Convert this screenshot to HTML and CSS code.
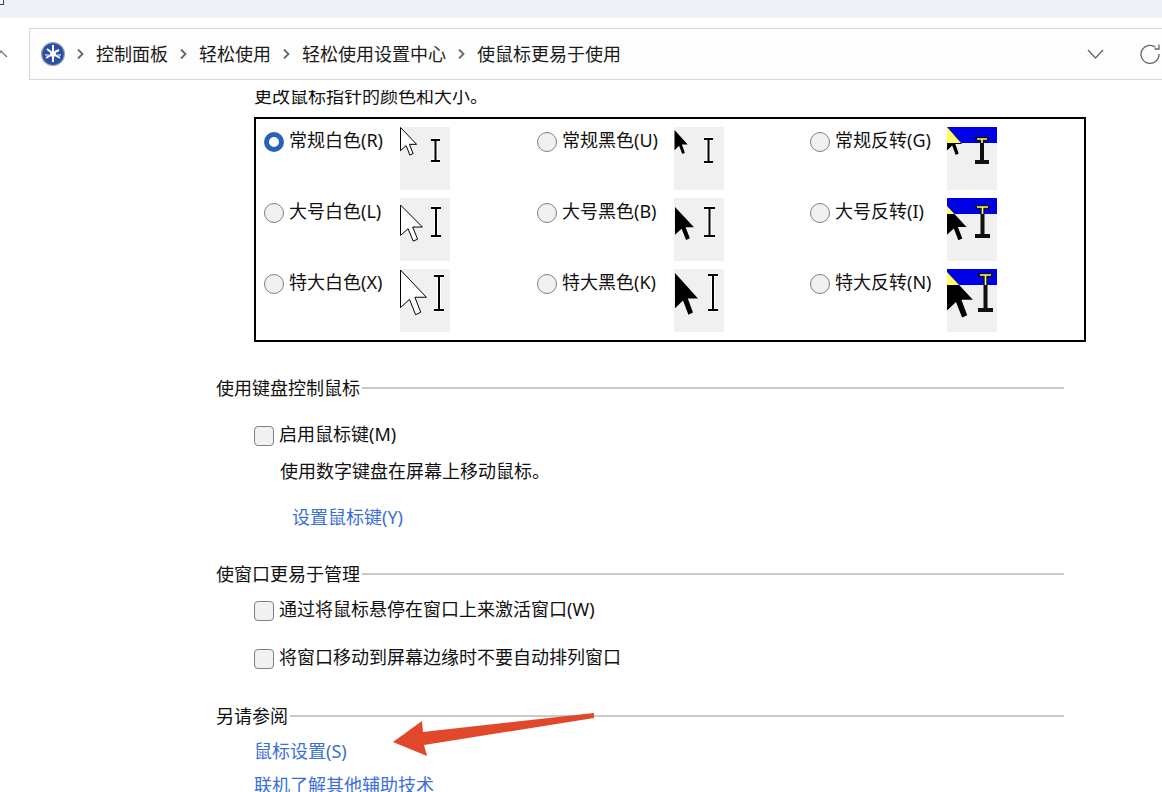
FILE: index.html
```html
<!DOCTYPE html>
<html lang="zh-CN">
<head>
    <meta charset="UTF-8">
    <title>使鼠标更易于使用</title>
    <link rel="stylesheet" href="styles.css">
</head>
<body>
    <svg class="sprite" width="0" height="0">
        <defs>
            <path id="arrow" d="M0 0V16L4 12.5L6.7 19L9 18L6.4 11.6H11.5Z" vector-effect="non-scaling-stroke"/>
            <clipPath id="topPart"><rect width="50" height="16"/></clipPath>
        </defs>
    </svg>

    <div class="topbar"><span class="top-glyph"></span></div>

    <div class="navrow">
        <svg class="back" width="8" height="10" viewBox="0 0 8 10"><path d="M-3 8L1 2L7 8" fill="none" stroke="#777" stroke-width="1.4"/></svg>
        <div class="address">
            <svg class="cp-icon" width="24" height="24" viewBox="0 0 24 24">
                <circle cx="12" cy="12" r="11.4" fill="#2b4ea6" stroke="#9aa3b5" stroke-width="1.2"/>
                <circle cx="12" cy="12" r="3" fill="#fff"/>
                <path d="M12 3V9M12 15V20M5 16L10 13M19 16L14 13M6 7L10 10M18 8L14 10" stroke="#fff" stroke-width="2"/>
                <path d="M4 13H8M16 13H20" stroke="#b9c8ea" stroke-width="1.5"/>
            </svg>
            <svg class="crumb-sep" width="7" height="10" viewBox="0 0 7 10"><path d="M1 0.5L5.5 5L1 9.5" fill="none" stroke="#666" stroke-width="1.8"/></svg>
            <span>控制面板</span>
            <svg class="crumb-sep" width="7" height="10" viewBox="0 0 7 10"><path d="M1 0.5L5.5 5L1 9.5" fill="none" stroke="#666" stroke-width="1.8"/></svg>
            <span>轻松使用</span>
            <svg class="crumb-sep" width="7" height="10" viewBox="0 0 7 10"><path d="M1 0.5L5.5 5L1 9.5" fill="none" stroke="#666" stroke-width="1.8"/></svg>
            <span>轻松使用设置中心</span>
            <svg class="crumb-sep" width="7" height="10" viewBox="0 0 7 10"><path d="M1 0.5L5.5 5L1 9.5" fill="none" stroke="#666" stroke-width="1.8"/></svg>
            <span>使鼠标更易于使用</span>
            <div class="address-tools">
                <svg width="17" height="10" viewBox="0 0 17 10"><path d="M1 1L8.5 9L16 1" fill="none" stroke="#666" stroke-width="1.3"/></svg>
                <svg width="20" height="20" viewBox="0 0 20 20"><path d="M15.5 3.2A9 9 0 1 0 19 10" fill="none" stroke="#666" stroke-width="1.3"/><path d="M19 0.5V5H14.5" fill="none" stroke="#666" stroke-width="1.3"/></svg>
            </div>
        </div>
    </div>

    <div class="main">
        <div class="intro">更改鼠标指针的颜色和大小。</div>

        <div class="scheme-box">
            <div class="option opt-first">
                <span class="radio radio-on"></span><span class="opt-label">常规白色(R)</span>
                <svg class="preview" width="50" height="63" viewBox="0 0 50 63">
                    <use href="#arrow" class="ar-white" transform="translate(0.5 0.5) scale(1.4 1.45)"/>
                    <path class="halo" d="M31 13H40M35.5 13V34M31 34H40"/><path class="beam" d="M31 13H40M35.5 13V34M31 34H40"/>
                </svg>
            </div>
            <div class="option">
                <span class="radio"></span><span class="opt-label">常规黑色(U)</span>
                <svg class="preview" width="50" height="63" viewBox="0 0 50 63">
                    <use href="#arrow" class="ar-black" transform="translate(0.5 3) scale(1.15 1.26)"/>
                    <path class="halo" d="M30 12H39M34.5 12V35M30 35H39"/><path class="beam" d="M30 12H39M34.5 12V35M30 35H39"/>
                </svg>
            </div>
            <div class="option">
                <span class="radio"></span><span class="opt-label">常规反转(G)</span>
                <svg class="preview" width="50" height="63" viewBox="0 0 50 63">
                    <rect class="inv-band" width="50" height="16"/>
                    <use href="#arrow" class="ar-black" transform="translate(0 0) scale(1.3 1.47)"/>
                    <g clip-path="url(#topPart)"><use href="#arrow" class="ar-yellow" transform="translate(0 0) scale(1.3 1.47)"/></g>
                    <path class="beam-thick" d="M28 12H42M35 12V35M28 35H42"/>
                    <path class="beam-inner" clip-path="url(#topPart)" d="M30 12H40M35 12V16"/>
                </svg>
            </div>

            <div class="option opt-first">
                <span class="radio"></span><span class="opt-label">大号白色(L)</span>
                <svg class="preview" width="50" height="63" viewBox="0 0 50 63">
                    <use href="#arrow" class="ar-white" transform="translate(0.5 7) scale(1.9)"/>
                    <path class="halo" d="M31 10H41M36 10V38M31 38H41"/><path class="beam" d="M31 10H41M36 10V38M31 38H41"/>
                </svg>
            </div>
            <div class="option">
                <span class="radio"></span><span class="opt-label">大号黑色(B)</span>
                <svg class="preview" width="50" height="63" viewBox="0 0 50 63">
                    <use href="#arrow" class="ar-black" transform="translate(1 9) scale(1.65 1.74)"/>
                    <path class="halo" d="M30 10H41M35.5 10V38M30 38H41"/><path class="beam" d="M30 10H41M35.5 10V38M30 38H41"/>
                </svg>
            </div>
            <div class="option">
                <span class="radio"></span><span class="opt-label">大号反转(I)</span>
                <svg class="preview" width="50" height="63" viewBox="0 0 50 63">
                    <rect class="inv-band" width="50" height="16"/>
                    <use href="#arrow" class="ar-black" transform="translate(0 8) scale(1.7 1.8)"/>
                    <g clip-path="url(#topPart)"><use href="#arrow" class="ar-yellow" transform="translate(0 8) scale(1.7 1.8)"/></g>
                    <path class="beam-thick" d="M28 9H43M35.5 9V38M28 38H43"/>
                    <path class="beam-inner" clip-path="url(#topPart)" d="M30 9H41M35.5 9V16"/>
                </svg>
            </div>

            <div class="option opt-first">
                <span class="radio"></span><span class="opt-label">特大白色(X)</span>
                <svg class="preview" width="50" height="63" viewBox="0 0 50 63">
                    <use href="#arrow" class="ar-white" transform="translate(0.5 1) scale(2.25 2.35)"/>
                    <path class="halo" d="M34 7H44M39 7V41M34 41H44"/><path class="beam" d="M34 7H44M39 7V41M34 41H44"/>
                </svg>
            </div>
            <div class="option">
                <span class="radio"></span><span class="opt-label">特大黑色(K)</span>
                <svg class="preview" width="50" height="63" viewBox="0 0 50 63">
                    <use href="#arrow" class="ar-black" transform="translate(1 4) scale(2 2.2)"/>
                    <path class="halo" d="M34 6H44M39 6V41M34 41H44"/><path class="beam" d="M34 6H44M39 6V41M34 41H44"/>
                </svg>
            </div>
            <div class="option">
                <span class="radio"></span><span class="opt-label">特大反转(N)</span>
                <svg class="preview" width="50" height="63" viewBox="0 0 50 63">
                    <rect class="inv-band" width="50" height="16"/>
                    <use href="#arrow" class="ar-black" transform="translate(0 3) scale(2.25 2.4)"/>
                    <g clip-path="url(#topPart)"><use href="#arrow" class="ar-yellow" transform="translate(0 3) scale(2.25 2.4)"/></g>
                    <path class="beam-thick" d="M31 6H46M38.5 6V41M31 41H46"/>
                    <path class="beam-inner" clip-path="url(#topPart)" d="M33 6H44M38.5 6V16"/>
                </svg>
            </div>
        </div>

        <div class="group-title title-keyboard">使用键盘控制鼠标</div>
        <div class="check-row check-mousekeys"><span class="checkbox"></span>启用鼠标键(M)</div>
        <div class="check-desc">使用数字键盘在屏幕上移动鼠标。</div>
        <a class="link link-setup">设置鼠标键(Y)</a>

        <div class="group-title title-window">使窗口更易于管理</div>
        <div class="check-row check-hover"><span class="checkbox"></span>通过将鼠标悬停在窗口上来激活窗口(W)</div>
        <div class="check-row check-snap"><span class="checkbox"></span>将窗口移动到屏幕边缘时不要自动排列窗口</div>

        <div class="group-title title-also">另请参阅</div>
        <a class="link link-see">鼠标设置(S)</a>
        <a class="link link-see link-online">联机了解其他辅助技术</a>
    </div>

    <svg class="red-arrow" width="210" height="50" viewBox="390 710 210 50">
        <path d="M393 742L422 721L423 732L594 713V718L424 745L427 756Z" fill="#e1472a"/>
    </svg>
</body>
</html>
```

FILE: styles.css
```css
html, body {
    margin: 0;
    height: 100%;
}

body {
    position: relative;
    height: 792px;
    overflow: hidden;
    background: #fff;
    color: #111;
    font-family: "Noto Sans", "Noto Sans CJK SC", sans-serif;
    font-size: 18px;
    line-height: 24px;
}

.sprite {
    display: block;
}

.topbar {
    height: 18px;
    background: #eef2f8;
}

.top-glyph {
    display: block;
    width: 3px;
    height: 4px;
    border-right: 1px solid #444;
    border-bottom: 1px solid #444;
}

/* address bar */
.navrow {
    display: flex;
    align-items: center;
    padding-top: 10px;
}

.back {
    flex: none;
    margin-right: 21px;
}

.address {
    flex: 1;
    display: flex;
    align-items: center;
    gap: 12px;
    height: 52px;
    box-sizing: border-box;
    margin-right: -8px;
    padding: 0 9px 0 11px;
    background: #fdfdfd;
    border: 1px solid #d9d9d9;
    color: #1a1a1a;
}

.cp-icon {
    flex: none;
}

.crumb-sep {
    flex: none;
}

.address-tools {
    margin-left: auto;
    display: flex;
    align-items: center;
    gap: 36px;
}

/* page content */
.main {
    height: 702px;
    margin-top: 10px;
    padding-left: 216px;
    overflow: hidden;
}

.intro {
    margin: -6px 0 9px 38px;
}

.scheme-box {
    display: grid;
    grid-template-columns: repeat(3, 273px);
    grid-auto-rows: 63px;
    row-gap: 8px;
    width: 832px;
    height: 225px;
    box-sizing: border-box;
    margin-left: 38px;
    padding: 8px;
    border: 2px solid #000;
}

.option {
    display: flex;
    align-items: flex-start;
}

.radio {
    flex: none;
    width: 20px;
    height: 20px;
    box-sizing: border-box;
    margin: 5px 5px 0 0;
    border: 1px solid #808080;
    border-radius: 50%;
    background: #f1f1f1;
}

.radio-on {
    border: 5.5px solid #2a62b8;
    background: #fff;
}

.opt-label {
    flex: none;
    width: 112px;
    margin-top: 1px;
}

.opt-first .opt-label {
    width: 111px;
}

.preview {
    flex: none;
    background: #f0f0f0;
}

.ar-white {
    fill: #fff;
    stroke: #000;
    stroke-width: 1;
}

.ar-black {
    fill: #000;
}

.ar-yellow {
    fill: #ffff66;
}

.inv-band {
    fill: #0000e6;
}

.halo {
    fill: none;
    stroke: #fff;
    stroke-width: 4;
}

.beam {
    fill: none;
    stroke: #000;
    stroke-width: 2;
}

.beam-thick {
    fill: none;
    stroke: #111;
    stroke-width: 4;
}

.beam-inner {
    fill: none;
    stroke: #ffff66;
    stroke-width: 1.6;
}

.group-title {
    display: flex;
    align-items: center;
    gap: 2px;
    width: 848px;
}

.group-title::after {
    content: "";
    flex: 1;
    height: 2px;
    background: #cacaca;
}

.title-keyboard { margin-top: 34px; }
.title-window { margin-top: 33px; }
.title-also { margin-top: 35px; }

.check-row {
    display: flex;
    align-items: flex-start;
    margin-left: 38px;
}

.checkbox {
    flex: none;
    width: 20px;
    height: 20px;
    box-sizing: border-box;
    margin: 4px 5px 0 0;
    border: 1px solid #808080;
    border-radius: 4px;
    background: #f1f1f1;
}

.check-mousekeys { margin-top: 22px; }
.check-hover { margin-top: 11px; }
.check-snap { margin-top: 24px; }

.check-desc {
    margin: 13px 0 0 64px;
}

.link {
    display: block;
    color: #3a6fd6;
}

.link-setup {
    margin: 22px 0 0 76px;
}

.link-see {
    margin: 11px 0 0 38px;
}

.link-online {
    margin-top: 10px;
}

/* annotation painted on top of the screenshot */
.red-arrow {
    position: absolute;
    left: 390px;
    top: 710px;
}
```
